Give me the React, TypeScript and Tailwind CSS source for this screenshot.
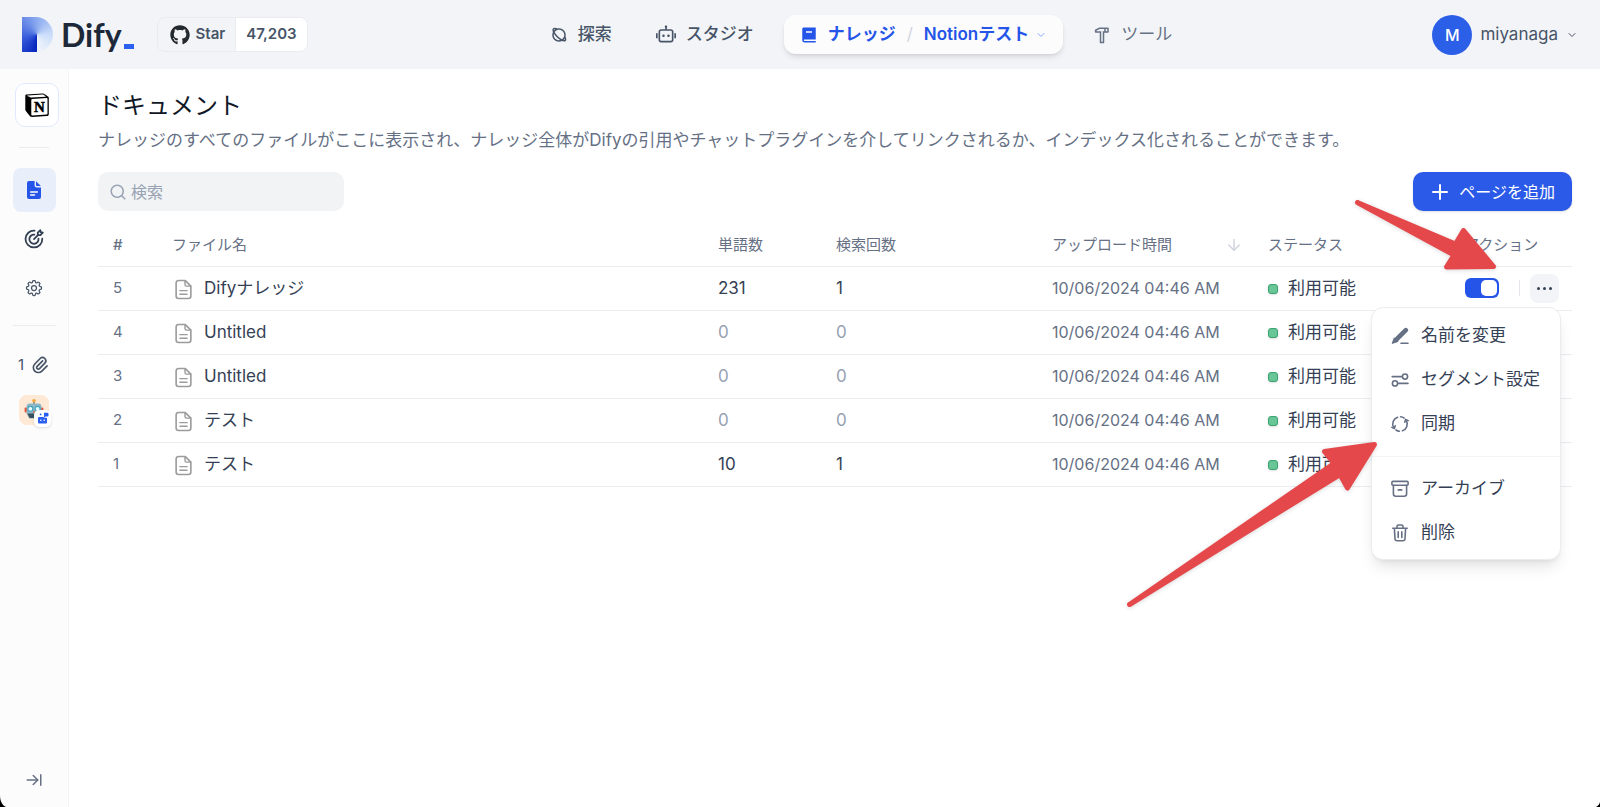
import React from 'react';
import { FaGithub } from 'react-icons/fa';
import { RiPlanetLine, RiRobot2Line, RiBook2Fill, RiHammerLine, RiSearchLine } from 'react-icons/ri';
import { HiOutlinePaperClip } from 'react-icons/hi';
import { HiOutlineCog8Tooth } from 'react-icons/hi2';
import { ArrowDown, ArrowRightToLine, ChevronDown, Plus } from 'lucide-react';

type Doc = {
    id: number;
    name: string;
    words: number;
    hits: number;
    uploadedAt: string;
};

const docs: Doc[] = [
    { id: 5, name: 'Difyナレッジ', words: 231, hits: 1, uploadedAt: '10/06/2024 04:46 AM' },
    { id: 4, name: 'Untitled', words: 0, hits: 0, uploadedAt: '10/06/2024 04:46 AM' },
    { id: 3, name: 'Untitled', words: 0, hits: 0, uploadedAt: '10/06/2024 04:46 AM' },
    { id: 2, name: 'テスト', words: 0, hits: 0, uploadedAt: '10/06/2024 04:46 AM' },
    { id: 1, name: 'テスト', words: 10, hits: 1, uploadedAt: '10/06/2024 04:46 AM' },
];

const strokeProps = {
    viewBox: '0 0 18 18',
    fill: 'none',
    stroke: 'currentColor',
    strokeWidth: 1.6,
    strokeLinecap: 'round' as const,
    strokeLinejoin: 'round' as const,
    'aria-hidden': true,
};

const RenameIcon = () => (
    <svg {...strokeProps} className="size-[18px]">
        <path d="M14.8 3.2 5 12.8" strokeWidth="4.6" />
        <path d="M3.2 11.2 1.2 16.4l5.4-1.8Z" fill="currentColor" strokeWidth="1" />
        <path d="M10 16.2h7" />
    </svg>
);

const SegmentIcon = () => (
    <svg {...strokeProps} className="size-[18px]">
        <path d="M1.2 5.6h10M7 12.4h10" />
        <circle cx="14" cy="5.6" r="2.6" />
        <circle cx="4" cy="12.4" r="2.6" />
    </svg>
);

const SyncIcon = () => (
    <svg {...strokeProps} className="size-[18px]">
        <path d="M6.6 2.2A7.2 7.2 0 0 0 2.8 12.8" />
        <path d="M.9 12.4l2.5 1.2.8-2.8" />
        <path d="M11.4 15.8A7.2 7.2 0 0 0 15.2 5.2" />
        <path d="M17.1 5.6l-2.5-1.2-.8 2.8" />
        <path d="M9.6 1.8a7.2 7.2 0 0 1 3.4 1.2M8.4 16.2A7.2 7.2 0 0 1 5 15" />
    </svg>
);

const ArchiveIcon = () => (
    <svg {...strokeProps} className="size-[18px]">
        <rect x=".9" y="1.4" width="16.2" height="3.8" rx="1" />
        <path d="M2.4 5.4v8.4a2.4 2.4 0 0 0 2.4 2.4h8.4a2.4 2.4 0 0 0 2.4-2.4V5.4M7.2 9.9h3.6" />
    </svg>
);

const TrashIcon = () => (
    <svg {...strokeProps} className="size-[18px]">
        <path d="M1.8 4.2h14.4M6 4V2.4c0-.8.5-1.4 1.4-1.4h3.2c.9 0 1.4.6 1.4 1.4V4M3.4 4.4l.6 10.4c.1 1.3.9 2 2.1 2h5.8c1.2 0 2-.7 2.1-2l.6-10.4M7.2 7.8v5.6M10.8 7.8v5.6" />
    </svg>
);

const FileIcon = () => (
    <svg viewBox="0 0 18 22" fill="none" stroke="#9b9b9b" strokeWidth="1.7" strokeLinecap="round" strokeLinejoin="round" className="h-[21px] w-[17px]" aria-hidden="true">
        <path d="M10.6 1.4H3.8A2.6 2.6 0 0 0 1.2 4v14a2.6 2.6 0 0 0 2.6 2.6h10.4a2.6 2.6 0 0 0 2.6-2.6V7.4Z" />
        <path d="M10.6 1.6v4.2c0 1 .6 1.6 1.6 1.6h4.4M5.2 12.2h7.6M5.2 16h7.6" strokeWidth="1.5" />
    </svg>
);

const NotionIcon = () => (
    <svg viewBox="0 0 24 24" className="size-6" aria-hidden="true">
        <path d="M1.2 1.6 17.6.4c1 0 1.4.2 2.2.8l3.2 2.3c.6.4.8.7.8 1.4v16c0 1.3-.5 2-1.8 2.1L7 24c-1 0-1.6-.2-2.2-.9L1.2 18.6c-.6-.8-.9-1.400-.9-2.200V3.200c0-.9.3-1.500.9-1.600Z" fill="#000" />
        <path d="M2.600 2.500 17.400 1.500c.7 0 1 .1 1.500.5l1.800 1.300c.3.200.1.400-.2.400L6.400 4.600c-.7 0-1-.1-1.500-.5L2.300 2.900c-.2-.2 0-.4.3-.4Z" fill="#fff" />
        <path d="M7.200 5.900 21.600 5c.6 0 .9.200.9.800v14.800c0 .6-.2.900-.8.900L7.200 22.400c-.6 0-.9-.2-.9-.8V6.900c0-.6.3-1 .9-1Z" fill="#fff" />
        <text x="14.400" y="18.800" textAnchor="middle" fontFamily="Liberation Serif, serif" fontWeight="700" fontSize="15" stroke="#000" strokeWidth=".5">N</text>
    </svg>
);

const TargetIcon = () => (
    <svg viewBox="0 0 20 20" fill="none" stroke="currentColor" strokeWidth="1.8" strokeLinecap="round" strokeLinejoin="round" className="size-5" aria-hidden="true">
        <path d="M10.6 1.7A8.4 8.4 0 1 0 18.3 9.6" />
        <path d="M10.4 5.6A4.6 4.6 0 1 0 14.5 9.6" />
        <path d="M10 10.1 14.2 5.8" />
        <path d="M13.8 6.2V3.6L16.3 1.2l.4 2 2.1.5-2.4 2.5Z" />
    </svg>
);

const DocumentsIcon = () => (
    <svg viewBox="0 0 16 20" className="h-5 w-4" aria-hidden="true">
        <path d="M3 1h5.6v4.2c0 1.4.8 2.200 2.200 2.200H15V17a2 2 0 0 1-2 2H3a2 2 0 0 1-2-2V3a2 2 0 0 1 2-2Z" fill="#2454e8" />
        <path d="M10 1.200 14.800 6h-3.800c-.7 0-1-.4-1-1Z" fill="#2454e8" />
        <path d="M4.6 12h6.8M4.6 15h4" stroke="#fff" strokeWidth="1.3" strokeLinecap="round" />
    </svg>
);

const RobotAvatar = () => (
    <svg viewBox="0 0 30 30" className="size-[30px]" aria-hidden="true">
        <rect width="30" height="30" rx="8" fill="#fde9d5" />
        <path d="M15 5v5" stroke="#6c7b86" strokeWidth="1.6" />
        <circle cx="15" cy="5.8" r="1.8" fill="#f0a93b" />
        <rect x="5.6" y="12.5" width="2.6" height="5" rx="1" fill="#e0563f" />
        <rect x="21.8" y="12.5" width="2.6" height="5" rx="1" fill="#e0563f" />
        <path d="M7.6 11.5c0-2 1-3 3-3h8.8c2 0 3 1 3 3v7l-2.6 5h-9.6l-2.6-5Z" fill="#8fb6c4" />
        <path d="M8.4 18.6h13.2L19.4 23h-8.8Z" fill="#39505f" />
        <circle cx="11.4" cy="13.8" r="3" fill="#3ea7c4" />
        <circle cx="18.6" cy="13.8" r="3" fill="#3ea7c4" />
        <circle cx="11.4" cy="13.8" r="1.9" fill="#e9fbff" />
        <circle cx="18.6" cy="13.8" r="1.9" fill="#e9fbff" />
        <path d="m15 15.2 1.2 2.4h-2.4Z" fill="#e0563f" />
    </svg>
);

const BotBadge = () => (
    <svg viewBox="0 0 12 12" className="size-3" fill="#2b5ff0" aria-hidden="true">
        <path d="M7 .8h3.6a.9.9 0 0 1 .9.9v1.9a.9.9 0 0 1-.9.9H8.8L7 5.4Z" />
        <circle cx="3.6" cy="2.4" r=".9" />
        <path d="M2 5h4.4l1 .8H10V10.6a.9.9 0 0 1-.9.9H1.9a.9.9 0 0 1-.9-.9V5.9c0-.5.4-.9 1-.9Z" />
        <circle cx="3.8" cy="8.2" r=".8" fill="#fff" />
        <circle cx="7.2" cy="8.2" r=".8" fill="#fff" />
    </svg>
);

const Header = () => (
    <header className="flex h-[69px] items-center justify-between bg-[#f2f4f7] px-[22px]">
        <div className="flex items-center">
            <a href="#" aria-label="Dify" className="flex items-center gap-2 text-[#1d2939]">
                <span className="block h-[35px] w-[31px] rounded-r-full bg-[conic-gradient(from_180deg_at_48%_50%,#0524bd,#3b5fdc_22%,#85a5ee_48%,#c9dcfa_74%,#f2f5fb)]" />
                <span className="flex items-baseline gap-0.5">
                    <span className="font-[Lato] text-[32px] leading-[39px] font-bold">Dify</span>
                    <span className="mb-px h-[5px] w-2.5 translate-y-0.5 bg-[#2b5ff0]" />
                </span>
            </a>
            <a href="#" className="ml-[23px] flex h-[35px] items-stretch overflow-hidden rounded-lg border border-[#eaecf0] text-[15px] font-semibold text-[#475467]">
                <span className="flex items-center gap-1.5 pr-2.5 pl-3">
                    <FaGithub className="size-5 text-[#24292f]" />
                    Star
                </span>
                <span className="flex items-center border-l border-[#eaecf0] bg-white px-2.5">47,203</span>
            </a>
        </div>

        <nav className="flex items-center pr-[18px] text-[17px] font-medium text-[#475467]">
            <a href="#" className="flex items-center gap-2.5">
                <RiPlanetLine className="size-[18px]" />
                探索
            </a>
            <a href="#" className="ml-11 flex items-center gap-2.5">
                <RiRobot2Line className="size-5" />
                スタジオ
            </a>
            <div className="ml-[30px] flex h-[39px] items-center rounded-xl bg-[#fcfcfd] px-4 font-bold text-[#2454e8] shadow-md">
                <a href="#" className="flex items-center gap-2.5">
                    <RiBook2Fill className="size-[18px]" />
                    ナレッジ
                </a>
                <span className="w-7 text-center font-normal text-[#d0d5dd]">/</span>
                <button type="button" className="flex items-center gap-1.5 font-semibold">
                    Notionテスト
                    <ChevronDown className="size-3 text-[#84a9ff]" />
                </button>
            </div>
            <a href="#" className="ml-[30px] flex items-center gap-2.5 font-normal text-[#667085]">
                <RiHammerLine className="size-[18px]" />
                ツール
            </a>
        </nav>

        <button type="button" className="flex items-center gap-2 text-[17px] text-[#475467]">
            <span className="flex size-10 items-center justify-center rounded-full bg-[#2b5fe8] text-base font-medium text-white">M</span>
            miyanaga
            <ChevronDown className="size-3" />
        </button>
    </header>
);

const Sidebar = () => (
    <aside className="flex w-[69px] shrink-0 flex-col items-center border-r border-[#f2f4f7] bg-[#fcfcfd] pt-3.5 text-[#475467]">
        <div className="ml-1.5 flex size-11 items-center justify-center rounded-[10px] border border-[#e0eaff] bg-white text-black">
            <NotionIcon />
        </div>
        <div className="mt-5 h-px w-[30px] bg-[#eaecf0]" />
        <nav className="mt-5 flex flex-col items-center gap-[5px]">
            <a href="#" aria-label="ドキュメント" className="flex h-11 w-[43px] items-center justify-center rounded-lg bg-[#e9eefb]">
                <DocumentsIcon />
            </a>
            <a href="#" aria-label="検索テスト" className="flex h-11 w-[43px] items-center justify-center text-[#344054]">
                <TargetIcon />
            </a>
            <a href="#" aria-label="設定" className="flex h-11 w-[43px] items-center justify-center">
                <HiOutlineCog8Tooth className="size-5" />
            </a>
        </nav>
        <div className="mt-[15px] h-px w-[43px] bg-[#eaecf0]" />
        <div className="mt-7 flex items-center gap-1.5 text-[15px]">
            1
            <HiOutlinePaperClip className="size-5" />
        </div>
        <a href="#" aria-label="リンクされたアプリ" className="relative mt-[18px]">
            <RobotAvatar />
            <span className="absolute top-[15px] left-[15px] flex size-[17px] items-center justify-center rounded-[5px] bg-white shadow">
                <BotBadge />
            </span>
        </a>
        <button type="button" aria-label="展開" className="mt-auto mb-[18px] text-[#667085]">
            <ArrowRightToLine className="size-[18px]" />
        </button>
    </aside>
);

const menuItemClass = 'flex h-11 w-full items-center gap-3 pl-[19px] text-left text-[17px] whitespace-nowrap text-[#344054]';
const menuIconClass = 'text-[#667085]';

const ActionMenu = () => (
    <div role="menu" className="absolute top-full -right-0.5 z-10 mt-1 w-[190px] rounded-xl border border-[#eaecf0] bg-white pt-1.5 pb-1 shadow-lg">
        <button type="button" role="menuitem" className={menuItemClass}>
            <span className={menuIconClass}><RenameIcon /></span>
            名前を変更
        </button>
        <button type="button" role="menuitem" className={menuItemClass}>
            <span className={menuIconClass}><SegmentIcon /></span>
            セグメント設定
        </button>
        <button type="button" role="menuitem" className={menuItemClass}>
            <span className={menuIconClass}><SyncIcon /></span>
            同期
        </button>
        <div className="my-2.5 h-px bg-[#f2f4f7]" />
        <button type="button" role="menuitem" className={menuItemClass}>
            <span className={menuIconClass}><ArchiveIcon /></span>
            アーカイブ
        </button>
        <button type="button" role="menuitem" className={menuItemClass}>
            <span className={menuIconClass}><TrashIcon /></span>
            削除
        </button>
    </div>
);

const RowActions = () => (
    <div className="flex items-center pl-px">
        <button type="button" role="switch" aria-checked="true" aria-label="有効" className="flex h-5 w-[34px] items-center justify-end rounded-[6px] bg-[#2454e8] p-0.5">
            <span className="size-4 rounded-[5px] bg-white" />
        </button>
        <div className="ml-5 h-4 w-px bg-[#e4e7ec]" />
        <div className="relative ml-2.5">
            <button type="button" aria-label="その他" className="flex size-[29px] items-center justify-center gap-[3px] rounded-lg bg-[#f2f4f7]">
                <span className="size-[3px] rounded-full bg-[#344054]" />
                <span className="size-[3px] rounded-full bg-[#344054]" />
                <span className="size-[3px] rounded-full bg-[#344054]" />
            </button>
            <ActionMenu />
        </div>
    </div>
);

const Count = ({ value }: { value: number }) => (
    <span className={value > 0 ? 'text-[#344054]' : 'text-[#98a2b3]'}>{value}</span>
);

const DocumentTable = () => (
    <table className="mt-3.5 w-full table-fixed text-left">
        <colgroup>
            <col className="w-[74px]" />
            <col />
            <col className="w-[118px]" />
            <col className="w-[216px]" />
            <col className="w-[216px]" />
            <col className="w-[196px]" />
            <col className="w-[108px]" />
        </colgroup>
        <thead>
            <tr className="h-[41px] border-b border-[#eaecf0] text-[15px] text-[#667085]">
                <th className="pl-[15px] font-medium">#</th>
                <th className="font-normal">ファイル名</th>
                <th className="font-normal">単語数</th>
                <th className="font-normal">検索回数</th>
                <th className="font-normal">
                    <div className="flex items-center justify-between pr-[25px]">
                        アップロード時間
                        <ArrowDown className="size-[18px] text-[#d0d5dd]" />
                    </div>
                </th>
                <th className="font-normal">ステータス</th>
                <th className="font-normal">アクション</th>
            </tr>
        </thead>
        <tbody>
            {docs.map((doc, index) => (
                <tr key={doc.id} className="h-11 border-b border-[#eaecf0] text-[17px] text-[#344054]">
                    <td className="pl-[15px] text-[15px] text-[#667085]">{doc.id}</td>
                    <td className="pt-0.5">
                        <div className="flex items-center gap-3 pl-[3px]">
                            <FileIcon />
                            {doc.name}
                        </div>
                    </td>
                    <td className="pt-0.5"><Count value={doc.words} /></td>
                    <td className="pt-0.5"><Count value={doc.hits} /></td>
                    <td className="text-base text-[#667085]">{doc.uploadedAt}</td>
                    <td className="pt-0.5">
                        <div className="flex items-center gap-2.5">
                            <span className="size-2.5 rounded-[3px] border border-[#3ba272] bg-[#67c596] shadow-sm" />
                            利用可能
                        </div>
                    </td>
                    <td>{index === 0 && <RowActions />}</td>
                </tr>
            ))}
        </tbody>
    </table>
);

// Red pointers at the row menu button and the sync entry
const Pointers = () => (
    <svg viewBox="0 0 500 440" className="pointer-events-none absolute top-[190px] right-0 z-20 h-[440px] w-[500px] drop-shadow-sm" fill="#e5484b" stroke="#e5484b" strokeWidth="5" strokeLinejoin="round" aria-hidden="true">
        <path d="M257.5 12.5 355.5 54 363.5 40.5 393.5 76.5 346.5 77 354 65Z" />
        <path d="M29.5 414.5 234 273.5 224.5 261.5 274.5 254.5 247.5 298 240 284.5Z" />
    </svg>
);

const App = () => {
    return (
        <div className="relative flex min-h-screen flex-col overflow-x-hidden bg-white font-[Inter,'Noto_Sans_CJK_JP',sans-serif]">
            <Header />
            <div className="flex flex-1">
                <Sidebar />
                <main className="min-w-0 flex-1 pt-[21px] pr-7 pl-[29px]">
                    <h1 className="text-2xl leading-8 text-[#101828]">ドキュメント</h1>
                    <p className="mt-1.5 text-[17px] leading-6 text-[#667085]">
                        ナレッジのすべてのファイルがここに表示され、ナレッジ全体がDifyの引用やチャットプラグインを介してリンクされるか、インデックス化されることができます。
                    </p>
                    <div className="mt-5 flex items-center justify-between">
                        <label className="flex h-[39px] w-[246px] items-center gap-1 rounded-[10px] bg-[#f1f3f5] px-[11px]">
                            <RiSearchLine className="size-[18px] shrink-0 text-[#98a2b3]" />
                            <input type="text" aria-label="検索" placeholder="検索" className="min-w-0 flex-1 bg-transparent text-base outline-none placeholder:text-[#98a2b3]" />
                        </label>
                        <button type="button" className="flex h-[39px] items-center gap-[7px] rounded-[10px] bg-[#2b5ae8] pr-[17px] pl-[15px] text-base text-white shadow-sm">
                            <Plus className="size-6" />
                            ページを追加
                        </button>
                    </div>
                    <DocumentTable />
                </main>
            </div>
            <Pointers />
            {/* Rounded window corners */}
            <svg viewBox="0 0 8 12" className="absolute bottom-0 left-0 h-3 w-2" aria-hidden="true">
                <path d="M0 0c0 6 2 10 6 12H0Z" fill="#000" />
            </svg>
            <svg viewBox="0 0 4 5" className="absolute right-0 bottom-0 h-[5px] w-1" aria-hidden="true">
                <path d="M4 0C3.600 2 2 4 0 5h4Z" fill="#000" />
            </svg>
        </div>
    );
};

export default App;
